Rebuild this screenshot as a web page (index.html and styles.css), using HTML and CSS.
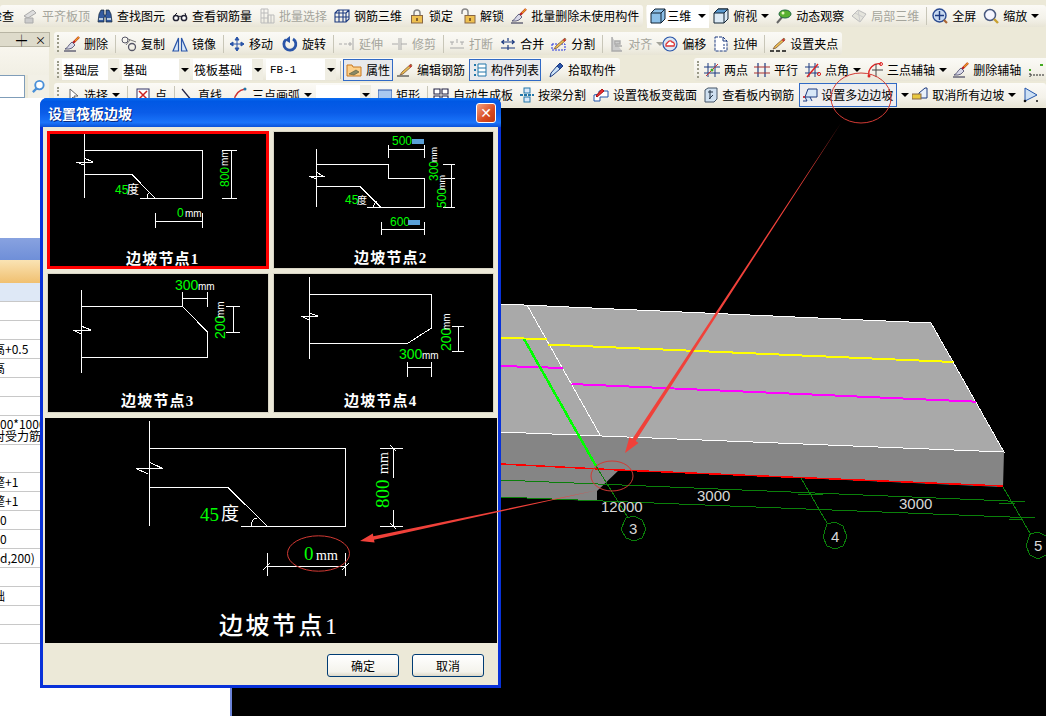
FILE: index.html
```html
<!DOCTYPE html>
<html lang="zh">
<head>
<meta charset="utf-8">
<title>设置筏板边坡</title>
<link rel="stylesheet" href="styles.css">
</head>
<body>
<svg class="defs" aria-hidden="true">
  <symbol id="brush" viewBox="0 0 16 16"><path d="M15 1 9 7" stroke="#b22" stroke-width="2.4" fill="none"/><path d="M15 1 11 5" stroke="#e8a020" stroke-width="1.2" fill="none"/><path d="M8 6l3 3-3 3-3 1H1c3-1 3-4 7-7z" fill="#d8d8e8" stroke="#446" stroke-width=".8"/><path d="M0 15h12" stroke="#224" stroke-width="1"/></symbol>
  <symbol id="pencil" viewBox="0 0 16 16"><path d="M14 2 5 10l-2 3 3-1 9-8z" fill="#f0c050" stroke="#864" stroke-width=".9"/><path d="M12.500 3.300l1.700 1.700" stroke="#c33" stroke-width="2"/></symbol>
  <symbol id="cube" viewBox="0 0 16 16"><path d="M1 5l4-4h10v10l-4 4H1z" fill="#8cc0e8" stroke="#123" stroke-width="1"/><path d="M1 5h10v10M11 5l4-4" fill="none" stroke="#123" stroke-width="1"/></symbol>
</svg>

<header class="row1">
  <div class="tb">
    <span class="it clip">检查</span>
    <span class="it off"><svg viewBox="0 0 16 16"><path d="M2 8l9-6 3 3-8 5z" fill="#ddd" stroke="#aaa"/><path d="M3 10h8v5H3z" fill="#ccc" stroke="#aaa"/></svg>平齐板顶</span>
    <span class="it"><svg viewBox="0 0 16 16"><path d="M2 6l2-4h3v5h2V2h3l2 4 1 8h-6V9H7v5H1z" fill="#345ba0" stroke="#123" stroke-width=".7"/><path d="M2 11h4M10 11h4" stroke="#bcd" stroke-width="2"/></svg>查找图元</span>
    <span class="it"><svg viewBox="0 0 16 16"><circle cx="4" cy="10" r="2.600" fill="#fff" stroke="#223" stroke-width="1.500"/><circle cx="12" cy="10" r="2.600" fill="#fff" stroke="#223" stroke-width="1.500"/><path d="M6 9c1-1 3-1 4 0M2 8l3-3M14 8l-1-3" stroke="#223" fill="none"/></svg>查看钢筋量</span>
    <span class="it off"><svg viewBox="0 0 16 16"><path d="M2 1h7v14H2zM2 5h7M2 10h7M5 1v14M9 7h6v8H9zM12 7v8" fill="none" stroke="#bbb"/></svg>批量选择</span>
    <span class="it"><svg viewBox="0 0 16 16"><path d="M1 5l3-3h11v9l-3 3H1zM1 5h11v9M12 5l3-3M5 2v12M9 2v12M1 9h14" fill="none" stroke="#1c3a80" stroke-width="1.100"/></svg>钢筋三维</span>
    <span class="it"><svg viewBox="0 0 16 16"><path d="M5 8V5a3 3 0 0 1 6 0v3" fill="none" stroke="#888" stroke-width="1.500"/><rect x="2.500" y="7.500" width="11" height="7.500" fill="#eec050" stroke="#864"/><path d="M8 10v3" stroke="#642" stroke-width="1.500"/></svg>锁定</span>
    <span class="it"><svg viewBox="0 0 16 16"><path d="M2 6V4a3 3 0 0 1 6 0v4" fill="none" stroke="#888" stroke-width="1.500"/><rect x="5" y="7.500" width="10" height="7.500" fill="#eec050" stroke="#864"/><path d="M10 10v3" stroke="#642" stroke-width="1.500"/></svg>解锁</span>
    <span class="it"><svg viewBox="0 0 16 16"><use href="#brush"/></svg>批量删除未使用构件</span>
  </div>
  <div class="tb tb-right">
    <span class="it checked"><svg viewBox="0 0 16 16"><use href="#cube"/></svg>三维<i class="arrow"></i></span>
    <span class="it l-3"><svg viewBox="0 0 16 16"><path d="M1 5l4-4h10v10l-4 4H1z" fill="#dceaf5" stroke="#123"/><path d="M1 5l4-4h10l-4 4z" fill="#5a9ad0" stroke="#123"/><path d="M11 5v10M11 5l4-4" stroke="#123"/></svg>俯视</span>
    <i class="arrow"></i>
    <span class="it"><svg viewBox="0 0 16 16"><path d="M1 15 7 8" stroke="#666" stroke-width="2"/><ellipse cx="9" cy="6" rx="6" ry="4" fill="#58b030" stroke="#264"/><circle cx="7" cy="5" r="1.500" fill="#e8f8c0"/></svg>动态观察</span>
    <span class="it off"><svg viewBox="0 0 16 16"><path d="M1 8l6-6 8 4-6 8z" fill="#e4e4dc" stroke="#bbb"/><path d="M4 5l8 4M7 2l2 12" stroke="#ccc"/></svg>局部三维</span>
    <i class="sep"></i>
    <span class="it"><svg viewBox="0 0 16 16"><circle cx="7.500" cy="7.500" r="6.500" fill="#c6d8f0" stroke="#2a4a90" stroke-width="1.400"/><path d="M7.500 3v9M3 7.500h9" stroke="#1c3a80" stroke-width="1.400"/><path d="M12 12l3 3" stroke="#a63" stroke-width="2.200"/></svg>全屏</span>
    <span class="it"><svg viewBox="0 0 16 16"><circle cx="7" cy="7" r="5.500" fill="#f6f6ff" stroke="#4a5a80" stroke-width="1.500"/><path d="M11 11l4 4" stroke="#c8a030" stroke-width="2.400"/></svg>缩放</span>
    <i class="arrow"></i>
  </div>
</header>

<div class="mid">
  <aside class="side">
    <div class="side-tab"><span class="pin">┿</span><span class="close">×</span></div>
    <div class="side-blank"></div>
    <div class="side-search">
      <div class="search-input"></div>
      <div class="search-btn"><svg viewBox="0 0 16 16"><circle cx="9" cy="6.500" r="4.500" fill="#fff" stroke="#4a90d8" stroke-width="2"/><path d="M6 10l-4 4" stroke="#4a90d8" stroke-width="2.500"/></svg></div>
    </div>
  </aside>

  <div class="stack">
    <div class="tbrow">
      <div class="tb tb-l">
        <i class="grip"></i>
        <span class="it"><svg viewBox="0 0 16 16"><use href="#brush"/></svg>删除</span>
        <i class="sep"></i>
        <span class="it"><svg viewBox="0 0 16 16"><circle cx="4" cy="4" r="3" fill="none" stroke="#556"/><circle cx="11" cy="11" r="3.500" fill="none" stroke="#556" stroke-width="1.300"/><path d="M7 3l8 3M5 9l4-5" stroke="#777"/></svg>复制</span>
        <span class="it"><svg viewBox="0 0 16 16"><path d="M6.500 2v13H1zM9.500 2v13H15z" fill="#d8e8f8" stroke="#2a55a8" stroke-width="1.200"/></svg>镜像</span>
        <i class="sep"></i>
        <span class="it"><svg viewBox="0 0 16 16"><path d="M8 1v14M1 8h14M8 1 6 4h4zM8 15l-2-3h4zM1 8l3-2v4zM15 8l-3-2v4z" fill="#2a55a8" stroke="#2a55a8"/></svg>移动</span>
        <span class="it l2"><svg viewBox="0 0 16 16"><path d="M4 3.500A6 6 0 1 0 11 3" fill="none" stroke="#2a55a8" stroke-width="2.800"/><path d="M8 0v7L3 4z" fill="#2a55a8"/></svg>旋转</span>
        <i class="sep"></i>
        <span class="it off"><svg viewBox="0 0 16 16"><path d="M0 8h3M5 8h3M10 7h2v2h-2zM14 2v12" stroke="#aaa" fill="none"/></svg>延伸</span>
        <span class="it off l2"><svg viewBox="0 0 16 16"><path d="M0 8h6M9 8h6M7 2v12M9 2v12" stroke="#aaa" fill="none"/></svg>修剪</span>
        <i class="sep"></i>
        <span class="it off"><svg viewBox="0 0 16 16"><path d="M1 12h14M1 6h4M11 6h4M3 9V6M13 9V6M8 3v4" stroke="#aaa" fill="none"/></svg>打断</span>
        <span class="it"><svg viewBox="0 0 16 16"><path d="M1 6h14M1 12h14M4 4l-2 2 2 2M12 4l2 2-2 2M8 2v3M8 9v5" stroke="#1c3a80" fill="none" stroke-width="1.200"/></svg>合并</span>
        <span class="it"><svg viewBox="0 0 16 16"><path d="M1 8h13v6H1z" fill="none" stroke="#23d" stroke-dasharray="2 1"/><use href="#pencil"/></svg>分割</span>
        <i class="sep"></i>
        <span class="it off"><svg viewBox="0 0 16 16"><path d="M4 1v14h10M7 5h5v3H7zM7 10h7" fill="#ccc" stroke="#aaa" stroke-width="1.400"/></svg>对齐</span>
        <i class="arrow grey tight"></i>
        <span class="it"><svg viewBox="0 0 16 16"><circle cx="8" cy="8" r="7" fill="#dce8f4" stroke="#2a55a8" stroke-width="1.200"/><path d="M4 10c-1-3 2-3 2-4 1-2 4-1 4 0 2 0 3 2 2 4z" fill="#fff" stroke="#d33" stroke-width="1.300"/></svg>偏移</span>
        <span class="it"><svg viewBox="0 0 16 16"><path d="M2 1h8l4 4v10H2z" fill="#fff" stroke="#1c3a80" stroke-dasharray="3 1"/><path d="M10 1v4h4M10 9h2M10 12h2" fill="none" stroke="#1c3a80"/></svg>拉伸</span>
        <i class="sep"></i>
        <span class="it"><svg viewBox="0 0 16 16"><path d="M0 15h4M6 15h4M12 15h4" stroke="#111" stroke-width="1.500"/><use href="#pencil"/></svg>设置夹点</span>
      </div>
    </div>

    <div class="tbrow">
      <div class="tb tb-l">
        <i class="grip"></i>
        <span class="combo c57 l-2"><span>基础层</span><b><i class="arrow"></i></b></span>
        <span class="combo c68 l-4"><span>基础</span><b><i class="arrow"></i></b></span>
        <span class="combo c70 l-4"><span>筏板基础</span><b><i class="arrow"></i></b></span>
        <span class="combo c70 l-4 fb"><span>FB-1</span><b><i class="arrow"></i></b></span>
        <i class="sep l-3"></i>
        <span class="it btn l-3"><svg viewBox="0 0 16 16"><path d="M1 3h5l1 2h8v9H1z" fill="#fdd08a" stroke="#c87820"/><path d="M3 12l7-4 3 2-5 3z" fill="#886" stroke="#553" stroke-width=".6"/></svg>属性</span>
        <span class="it l-3"><svg viewBox="0 0 16 16"><path d="M0 14h12" stroke="#222"/><use href="#pencil"/></svg>编辑钢筋</span>
        <span class="it btn l-3 btn-list"><svg class="n14" viewBox="0 0 14 16"><path d="M1 2h2v2H1zM1 7h2v2H1zM1 12h2v2H1z" fill="#27a"/><path d="M5 2h8v12H5zM5 6h8M5 10h8" fill="#fff" stroke="#27a"/></svg>构件列表</span>
        <span class="it"><svg viewBox="0 0 16 16"><path d="M2 15 3 11l6-7 3 3-7 6z" fill="#cde4f8" stroke="#1c3a80"/><path d="M9 4l3-3 3 3-3 3" fill="#2a55a8" stroke="#1c3a80"/></svg>拾取构件</span>
      </div>
      <div class="tb tb-axis">
        <i class="grip"></i>
        <span class="it"><svg viewBox="0 0 16 16"><path d="M4 1v14M11 1v14M0 5h16M0 11h16" stroke="#1c3a80"/><path d="M2 14 14 2" stroke="#c33"/><circle cx="8" cy="8" r="1.500" fill="#4a2"/></svg>两点</span>
        <span class="it l-1"><svg viewBox="0 0 16 16"><path d="M4 1v14M11 1v14" stroke="#1c3a80" stroke-width="1.200"/><path d="M0 5h16M0 11h16" stroke="#a33" stroke-width="1.200"/></svg>平行</span>
        <span class="it"><svg viewBox="0 0 16 16"><path d="M4 1v14M10 1v14M0 5h14M0 11h14" stroke="#1c3a80"/><path d="M2 15 13 2" stroke="#d22" stroke-width="1.400"/><circle cx="14" cy="12" r="1.600" fill="none" stroke="#d22"/></svg>点角</span>
        <i class="arrow"></i>
        <span class="it l-1"><svg viewBox="0 0 16 16"><path d="M2 14A10 10 0 0 1 14 2" fill="none" stroke="#d22" stroke-width="1.300"/><path d="M5 8h11M9 2v13" stroke="#444"/><circle cx="2" cy="14" r="1.500" fill="#d22"/><circle cx="14" cy="2" r="1.500" fill="none" stroke="#d22"/></svg>三点辅轴</span>
        <i class="arrow"></i>
        <span class="it l-1"><svg viewBox="0 0 16 16"><use href="#brush"/></svg>删除辅轴</span>
        <span class="it"><svg viewBox="0 0 16 16"><path d="M2 13h14M2 11v4" stroke="#222" stroke-dasharray="2 1"/><rect x="1" y="7" width="2" height="2" fill="#4a2"/><rect x="12" y="2" width="3" height="2" fill="#4a2"/></svg></span>
      </div>
    </div>

    <div class="tbrow tbrow-last">
      <div class="tb tb-full">
        <i class="grip"></i>
        <span class="it l2"><svg class="n14" viewBox="0 0 14 16"><path d="M4 2v11l3-3 2 4 1-1-2-4h4z" fill="#fff" stroke="#666"/></svg>选择</span>
        <i class="arrow l-1"></i>
        <i class="sep"></i>
        <span class="it l2"><svg viewBox="0 0 16 16"><rect x="2" y="2" width="12" height="12" fill="#fff" stroke="#336"/><path d="M4 4l8 8M12 4l-8 8" stroke="#c22" stroke-width="1.500"/></svg>点</span>
        <i class="sep"></i>
        <span class="it"><svg class="n14" viewBox="0 0 14 16"><path d="M2 2l10 12" stroke="#224" stroke-width="1.200"/></svg>直线</span>
        <span class="it l3"><svg viewBox="0 0 16 16"><path d="M2 14C3 7 7 3 13 2" fill="none" stroke="#c33" stroke-width="1.500"/><circle cx="2" cy="14" r="1.500" fill="#27a"/><circle cx="13" cy="2" r="1.500" fill="#27a"/></svg>三点画弧</span>
        <i class="arrow"></i>
        <span class="combo c55 l-3"><span></span><b><i class="arrow"></i></b></span>
        <span class="it"><svg class="n14" viewBox="0 0 14 16"><rect x="0" y="3" width="14" height="10" fill="#a8c8f0" stroke="#2a55a8"/></svg>矩形</span>
        <i class="sep"></i>
        <span class="it"><svg viewBox="0 0 16 16"><path d="M1 2h6v5H1zM9 2h6v5H9zM1 9h6v5H1zM9 9h6v5H9z" fill="#fff" stroke="#224" stroke-width="1.100"/></svg>自动生成板</span>
        <span class="it"><svg class="n14" viewBox="0 0 14 16"><path d="M0 8h14" stroke="#27a" stroke-width="2" stroke-dasharray="3 1"/><rect x="4" y="1" width="6" height="5" fill="#d8e8f8" stroke="#27a"/><rect x="4" y="10" width="6" height="5" fill="#d8e8f8" stroke="#27a"/></svg>按梁分割</span>
        <span class="it"><svg viewBox="0 0 16 16"><path d="M1 14V8l5-1v-3h9v6H7v4z" fill="#fff" stroke="#25a"/><path d="M3 9l6-7 2 2-7 6z" fill="#e33" stroke="#a11"/></svg>设置筏板变截面</span>
        <span class="it"><svg class="n14" viewBox="0 0 14 16"><path d="M1 3l3-2h9v11l-3 3H1z" fill="#cfe0f0" stroke="#456"/><path d="M4 5h5M6 3v9M9 8l-4 4" stroke="#234"/></svg>查看板内钢筋</span>
        <span class="it btn btn-ml l-2"><svg viewBox="0 0 16 16"><path d="M1 14h4L3 10l3-8h9v8H8l2 4" fill="#d8e8f8" stroke="#1c3a80"/><path d="M1 10h7" stroke="#1c3a80"/><circle cx="2" cy="10" r="1" fill="#d22"/></svg>设置多边边坡</span>
        <i class="arrow l-5"></i>
        <span class="it l-4"><svg viewBox="0 0 16 16"><path d="M7 6l6-5h2v10H7z" fill="#e8f0fa" stroke="#1c3a80"/><rect x="0" y="7" width="9" height="5" fill="#e8c840" stroke="#864"/></svg>取消所有边坡</span>
        <i class="arrow"></i>
        <span class="it"><svg viewBox="0 0 16 16"><path d="M2 1v13l12-6z" fill="#cde0f4" stroke="#25a"/><circle cx="2" cy="14" r="1.300" fill="#111"/><circle cx="14" cy="14" r="1" fill="#111"/></svg></span>
      </div>
    </div>
  </div>
</div>

<main class="main">
  <section class="props">
    <div class="tree"></div>
    <div class="ph-blue"></div>
    <div class="ph-orange"></div>
    <div class="ph-light"></div>
    <div class="prow"></div>
    <div class="prow"></div>
    <div class="prow"><span class="cut">高<span class="num">+0.5</span></span></div>
    <div class="prow"><span class="cut">高</span></div>
    <div class="prow"></div>
    <div class="prow"></div>
    <div class="prow tall"><span class="num">00*1000</span><span class="cut">对受力筋</span></div>
    <div class="prow tall"></div>
    <div class="prow"><span class="cut">整<span class="num">+1</span></span></div>
    <div class="prow"><span class="cut">整<span class="num">+1</span></span></div>
    <div class="prow"><span class="num">0</span></div>
    <div class="prow"><span class="num">0</span></div>
    <div class="prow"><span class="num">d,200)</span></div>
    <div class="prow"></div>
    <div class="prow"><span class="cut">础</span></div>
    <div class="prow"></div>
    <div class="prow"></div>
  </section>
  <section class="canvas">
    <svg class="scene" viewBox="232 108 814 608">
      <path class="face" d="M501 432 1004 452 1003 487 619 470 597 491 597 501 501 497z"/>
      <path class="top" d="M501 304 931 323 1004 452 501 432z"/>
      <path class="edge" d="M501 304 931 323 1004 452 501 432M527 305 600 435"/>
      <path class="yellow" d="M501 338 547 339M548.500 344.600 953.500 362"/>
      <path class="magenta" d="M501 366 563 368M571.500 384 976 401.700"/>
      <path class="lime" d="M524 339 596 466"/>
      <path class="redline" d="M501 464 619 470 1003 486"/>
      <path class="grid" d="M501 480 1025 501.700M501 497 1035 518M596 466 627.600 517M801 478 827 523M1003 487 1031 535M609 484H621M798 494H823M999 503H1015M1009 519H1022"/>
      <polygon class="grid" points="626,518 634,516 642,520 646,529 642,538 634,541 626,538 621,529"/>
      <polygon class="grid" points="827,524 835,522 843,526 847,537 843,546 835,549 827,546 823,537"/>
      <polygon class="grid" points="1030,534 1038,532 1046,536 1050,546 1046,555 1038,559 1030,555 1026,546"/>
      <text class="dim" x="697" y="501">3000</text>
      <text class="dim" x="899" y="509">3000</text>
      <text class="dim" x="601" y="512">12000</text>
      <text class="dim" x="629" y="534">3</text>
      <text class="dim" x="831" y="542">4</text>
      <text class="dim" x="1034" y="551">5</text>
    </svg>
  </section>
</main>

<div class="dialog">
  <div class="title"><span>设置筏板边坡</span><button class="x" type="button">✕</button></div>
  <div class="body">
    <div class="thumbs">
      <div class="thumb sel">
        <svg class="draw" viewBox="50 134 216 132">
          <path d="M84.500 134V198M84.500 150.500H202.500V198.500H140M84.500 174.500H132L155 198M84 158 93 162H76L84 165M147 198A7 7 0 0 1 150 192M222 150.500H237M222 198.500H237M231.500 150.500V198.500M155.500 213V228M202.500 213V228M155 221H202"/>
          <text class="g s12" x="115" y="194">45</text><text class="w s12" x="127" y="194">度</text>
          <text class="g s12" transform="rotate(-90 229 187)" x="229" y="187">800</text>
          <text class="w s10" transform="rotate(-90 228 166)" x="228" y="166">mm</text>
          <text class="g s12" x="177" y="217">0</text><text class="w s10" x="185" y="217">mm</text>
          <text class="lbl s16" x="126" y="264">边坡节点1</text>
        </svg>
      </div>
      <div class="thumb">
        <svg class="draw" viewBox="274 132 219 136">
          <path d="M316.500 149V207M316.500 164.500H388.500V178.500H424.500V207.500H367M316.500 186.500H360L381 207.500M316 172 323 176H309L316 179M374 207A6 6 0 0 1 377 201M388.500 145V158M424.500 145V158M388 149.500H425M443 164.500H455M443 178.500H455M443 207.500H455M451.500 164.500V207.500M381.500 222V235M424.500 222V235M381 229.500H425"/>
          <text class="g s12" x="392" y="145">500</text><rect class="mmbar" x="412" y="139" width="12" height="5"/>
          <text class="g s12" x="345" y="204">45</text><text class="w s10" x="357" y="204">度</text>
          <text class="g s12" transform="rotate(-90 438 181)" x="438" y="181">300</text>
          <text class="w s9" transform="rotate(-90 437 162)" x="437" y="162">mm</text>
          <text class="g s12" transform="rotate(-90 446 208)" x="446" y="208">500</text>
          <text class="w s9" transform="rotate(-90 445 190)" x="445" y="190">mm</text>
          <text class="g s12" x="390" y="226">600</text><rect class="mmbar" x="408" y="220" width="12" height="5"/>
          <text class="lbl s16" x="354" y="263">边坡节点2</text>
        </svg>
      </div>
      <div class="thumb">
        <svg class="draw" viewBox="48 274 220 138">
          <path d="M81.500 290V373M81.500 306.500H182.500L207.500 332V357.500H81.500M81 326 91 330H73L81 334M182.500 292V307M207.500 292V307M182 298.500H208M226 306.500H240M226 332.500H240M233.500 306.500V332.500"/>
          <text class="g s14" x="175" y="290">300</text><text class="w s10" x="198" y="290">mm</text>
          <text class="g s14" transform="rotate(-90 225 339)" x="225" y="339">200</text>
          <text class="w s10" transform="rotate(-90 224 318)" x="224" y="318">mm</text>
          <text class="lbl s16" x="121" y="406">边坡节点3</text>
        </svg>
      </div>
      <div class="thumb">
        <svg class="draw" viewBox="274 274 219 138">
          <path d="M309.500 277V359M309.500 294.500H431.500V328L407.500 343.500H309.500M309 313 318 316H301L309 320M452 326.500H464M452 351.500H464M458.500 326.500V351.500M407.500 362V377M431.500 362V377M407 367.500H432"/>
          <text class="g s14" x="399" y="359">300</text><text class="w s10" x="422" y="359">mm</text>
          <text class="g s14" transform="rotate(-90 451 351)" x="451" y="351">200</text>
          <text class="w s10" transform="rotate(-90 450 330)" x="450" y="330">mm</text>
          <text class="lbl s16" x="344" y="406">边坡节点4</text>
        </svg>
      </div>
    </div>
    <div class="preview">
      <svg class="draw" viewBox="45 418 452 225">
        <path d="M149.500 421V526M149.500 448.500H345.500V526.500H241M149.500 487.500H228L267 526M149 462 162.700 468.500H136L148 474M252 526A6 6 0 0 1 257 518M380 448.500H403M380 526.500H403M393.500 448.500V478M393.500 510V526.500M267.500 553V576M345.500 553V576M267 566.500H345M390 445 396 451M390 523 396 529M263 570 270 563M342 570 349 563"/>
        <text class="gs s19" x="200" y="521">45</text><text class="ws s18" x="221" y="520">度</text>
        <text class="gs s19" transform="rotate(-90 389 508)" x="389" y="508">800</text>
        <text class="ws s14" transform="rotate(-90 388 474)" x="388" y="474">mm</text>
        <text class="gs s19" x="304" y="560">0</text><text class="ws s14" x="316" y="560">mm</text>
        <text class="lbl lbl-big s24" x="219" y="634">边坡节点1</text>
      </svg>
    </div>
    <div class="foot">
      <button class="okbtn" type="button">确定</button>
      <button class="okbtn" type="button">取消</button>
    </div>
  </div>
</div>

<svg class="marks" viewBox="0 0 1046 716" aria-hidden="true">
  <ellipse class="ring" cx="861" cy="98" rx="30" ry="25"/>
  <ellipse class="ring" cx="612" cy="476" rx="21" ry="15"/>
  <ellipse class="ring" cx="318.500" cy="553.500" rx="31" ry="17.700"/>
  <polygon class="red" points="841,123 635.700,441 638.500,443 625,453 629.500,437 632.300,439"/>
  <polygon class="red" points="598,490 374,539.700 374.600,542.400 360,541 372.800,533.600 373.300,536.300"/>
</svg>
</body>
</html>
```
FILE: styles.css
```css
* { box-sizing: border-box; }
html, body { margin: 0; height: 100%; }
body {
  width: 1046px; height: 716px; overflow: hidden; position: relative;
  display: flex; flex-direction: column;
  background: #ece9d8; color: #000;
  font: 12px/16px "Noto Sans CJK SC", sans-serif;
}
i { display: block; font-style: normal; }
.defs { position: absolute; width: 0; height: 0; }

.row1 { display: flex; height: 30px; padding-top: 5px; padding-bottom: 3px; flex: none; overflow: hidden; }
.tb {
  display: flex; align-items: center; gap: 7px; flex: none;
  background: linear-gradient(#fbfaf6, #f4f2ea 60%, #e8e5d6);
  border-radius: 3px; padding: 0 4px 0 3px; height: 100%;
}
.tb-right { flex: 1; margin-left: 3px; padding-left: 1px; }
.it { display: flex; align-items: center; gap: 4px; white-space: nowrap; flex: none; }
.it svg { width: 16px; height: 16px; flex: none; }
.it svg.n14 { width: 14px; }
.clip { margin-left: -13px; margin-right: 1px; }
.off { color: #a5a59c; }
.l2 { margin-left: 2px; }
.l3 { margin-left: 3px; }
.l-1 { margin-left: -1px; }
.l-2 { margin-left: -2px; }
.l-3 { margin-left: -3px; }
.l-4 { margin-left: -4px; }
.l-5 { margin-left: -5px; }

.checked { background: #fff; height: 23px; padding: 0 3px; gap: 1px; }
.checked .arrow { margin-left: 6px; }

.arrow {
  width: 8px; height: 4px; margin-left: -3px; flex: none;
  border-left: 4px solid transparent; border-right: 4px solid transparent;
  border-top: 4px solid #000;
}
.arrow.grey { border-top-color: #a5a59c; }
.arrow.tight { margin-right: -9px; }
.sep { width: 1px; height: 18px; background: #c8c6b8; margin-right: -2px; flex: none; }
.grip { width: 2px; height: 17px; border-left: 2px dotted #9a9a88; margin-right: -2px; flex: none; }

.mid { display: flex; height: 78px; flex: none; padding-top: 2px; }
.side { width: 54px; flex: none; display: flex; flex-direction: column; }
.side-tab {
  height: 15px; width: 50px; display: flex; justify-content: flex-end; gap: 8px; align-items: center;
  background: #dedbcb; border: 1px solid #b8b5a4; border-left: 0; padding-right: 3px; font-size: 11px; line-height: 12px;
}
.side-blank { height: 28px; width: 49px; background: linear-gradient(#f8f6ee, #f1efe4); }
.side-search { height: 23px; width: 50px; display: flex; gap: 3px; background: #ece9d8; }
.search-input { width: 25px; background: #fff; border: 1px solid #7f9db9; border-left: 0; }
.search-btn { width: 21px; background: #f2f0e6; display: flex; align-items: center; justify-content: center; }
.search-btn svg { width: 15px; height: 15px; }
.side::after { content: ""; height: 10px; width: 54px; background: #fff; }

.stack { flex: 1; min-width: 0; display: flex; flex-direction: column; gap: 3px; overflow: hidden; }
.tbrow { display: flex; height: 23px; flex: none; }
.tbrow-last { height: 24px; margin-top: -1px; }
.tb-axis { margin-left: 74px; flex: 1; }
.tb-full { flex: 1; }

.combo { display: flex; height: 21px; align-items: center; background: #fff; flex: none; overflow: hidden; }
.combo > span { flex: 1; padding-left: 1px; white-space: nowrap; }
.combo > b { width: 11px; height: 100%; background: #efede2; display: flex; align-items: center; justify-content: center; }
.combo > b .arrow { margin: 0; }
.combo.fb > span { font-family: "Liberation Mono", monospace; font-size: 11px; padding-left: 4px; }
.c55 { width: 55px; }
.c57 { width: 57px; }
.c68 { width: 68px; }
.c70 { width: 70px; }

.btn { border: 1px solid #316ac5; background: #e8e9ec; height: 22px; padding: 0 2px; }
.btn-list { padding: 0 1px 0 3px; }
.btn-ml { height: 24px; gap: 3px; padding-right: 3px; background: #eeeef0; }

.main { display: flex; flex: 1; min-height: 0; }
.props {
  width: 232px; flex: none; background: #fff; overflow: hidden;
  display: flex; flex-direction: column; border-right: 2px solid #6b83d8;
}
.tree { height: 130px; flex: none; }
.ph-blue { height: 22px; flex: none; background: linear-gradient(#88a2e0, #6f8fd8); }
.ph-orange { height: 23px; flex: none; background: linear-gradient(#fae3b4, #f0c070); }
.ph-light { height: 19px; flex: none; background: #dee8f6; border-bottom: 1px solid #c8c8c8; }
.prow {
  height: 19px; flex: none; border-bottom: 1px solid #c8c8c8;
  line-height: 18px; white-space: nowrap; display: flex; flex-direction: column;
}
.prow.tall { height: 28.500px; line-height: 12px; padding-top: 2px; }
.cut { margin-left: -7px; }
.num { font: 10px/inherit "Liberation Mono", monospace; line-height: inherit; }
.canvas { flex: 1; background: #000; min-width: 0; }
.scene { display: block; width: 100%; height: 100%; }
.face { fill: #858585; }
.top { fill: #a9a9a9; }
.edge, .yellow, .magenta, .lime, .redline, .grid { fill: none; shape-rendering: crispEdges; }
.edge { stroke: #fff; stroke-width: 1; }
.yellow { stroke: #ff0; stroke-width: 2; }
.magenta { stroke: #f0f; stroke-width: 2; }
.lime { stroke: #0f0; stroke-width: 2.500; }
.redline { stroke: #f00; stroke-width: 1.500; }
.grid { stroke: #0a800a; stroke-width: 1; }
.dim { fill: #d8d8d8; font: 15px "Liberation Sans", sans-serif; }

.dialog {
  position: absolute; left: 40px; top: 98px; width: 461px; height: 590px;
  display: flex; flex-direction: column;
  background: #0831d9; border-radius: 7px 7px 0 0; padding: 0 3px 3px;
}
.title {
  height: 29px; flex: none; margin: 0 -3px; padding: 0 5px 0 8px;
  display: flex; align-items: center; justify-content: space-between;
  border-radius: 7px 7px 0 0;
  background: linear-gradient(#0a6cf0 0, #0058e4 12%, #0a5ce8 50%, #1a74fa 85%, #0a52d8 100%);
  color: #fff; font-weight: 700; font-size: 14px; text-shadow: 1px 1px 0 #0a2a80;
}
.x {
  width: 20px; height: 20px; padding: 0; border: 1px solid #fff; border-radius: 3px;
  background: linear-gradient(135deg, #f0a080, #d84a20 60%, #c03810);
  color: #fff; font: 700 14px/18px "DejaVu Sans", sans-serif;
}
.body { flex: 1; min-height: 0; background: #ece9d8; display: flex; flex-direction: column; }
.thumbs {
  display: grid; grid-template-columns: 222px 221px; grid-template-rows: 138px 140px;
  column-gap: 4px; row-gap: 4px; padding: 4px 0 0 4px; flex: none;
}
.thumb { background: #000; border: 1px solid #d8d5c5; overflow: hidden; }
.thumb.sel { border: 3px solid #f00; }
.draw { display: block; width: 100%; height: 100%; }
.draw path { fill: none; stroke: #fff; stroke-width: 1; shape-rendering: crispEdges; }
.g, .gs { fill: #0f0; }
.w, .ws { fill: #fff; }
.g, .w { font-family: "Liberation Sans", "Noto Sans CJK SC", sans-serif; }
.gs, .ws { font-family: "Liberation Serif", "Noto Sans CJK SC", serif; }
.mmbar { fill: #5aa0d8; }
.lbl { fill: #fff; font-family: "Liberation Serif", "Noto Sans CJK SC", serif; font-weight: 700; }
.lbl-big { font-weight: 500; }
.s9 { font-size: 9px; }
.s10 { font-size: 10px; }
.s12 { font-size: 12px; }
.s14 { font-size: 14px; }
.s16 { font-size: 15px; letter-spacing: 1.200px; }
.s18 { font-size: 18px; }
.s19 { font-size: 19px; }
.s24 { font-size: 24px; letter-spacing: 2.500px; }
.preview { height: 225px; flex: none; margin: 5px 0 0 2px; width: 452px; background: #000; }
.foot { flex: 1; display: flex; justify-content: flex-end; gap: 13px; padding: 11px 14px 0 0; }
.okbtn {
  width: 72px; height: 23px; padding: 0; color: #000;
  border: 1px solid #003c74; border-radius: 3px;
  background: linear-gradient(#fff, #f4f3ec 80%, #dcd8c8);
  font: 12px/20px "Noto Sans CJK SC", sans-serif;
}
.marks { position: absolute; left: 0; top: 0; width: 1046px; height: 716px; pointer-events: none; }
.ring { fill: none; stroke: #d23a34; stroke-width: 1; }
.red { fill: #f0413a; }
```
